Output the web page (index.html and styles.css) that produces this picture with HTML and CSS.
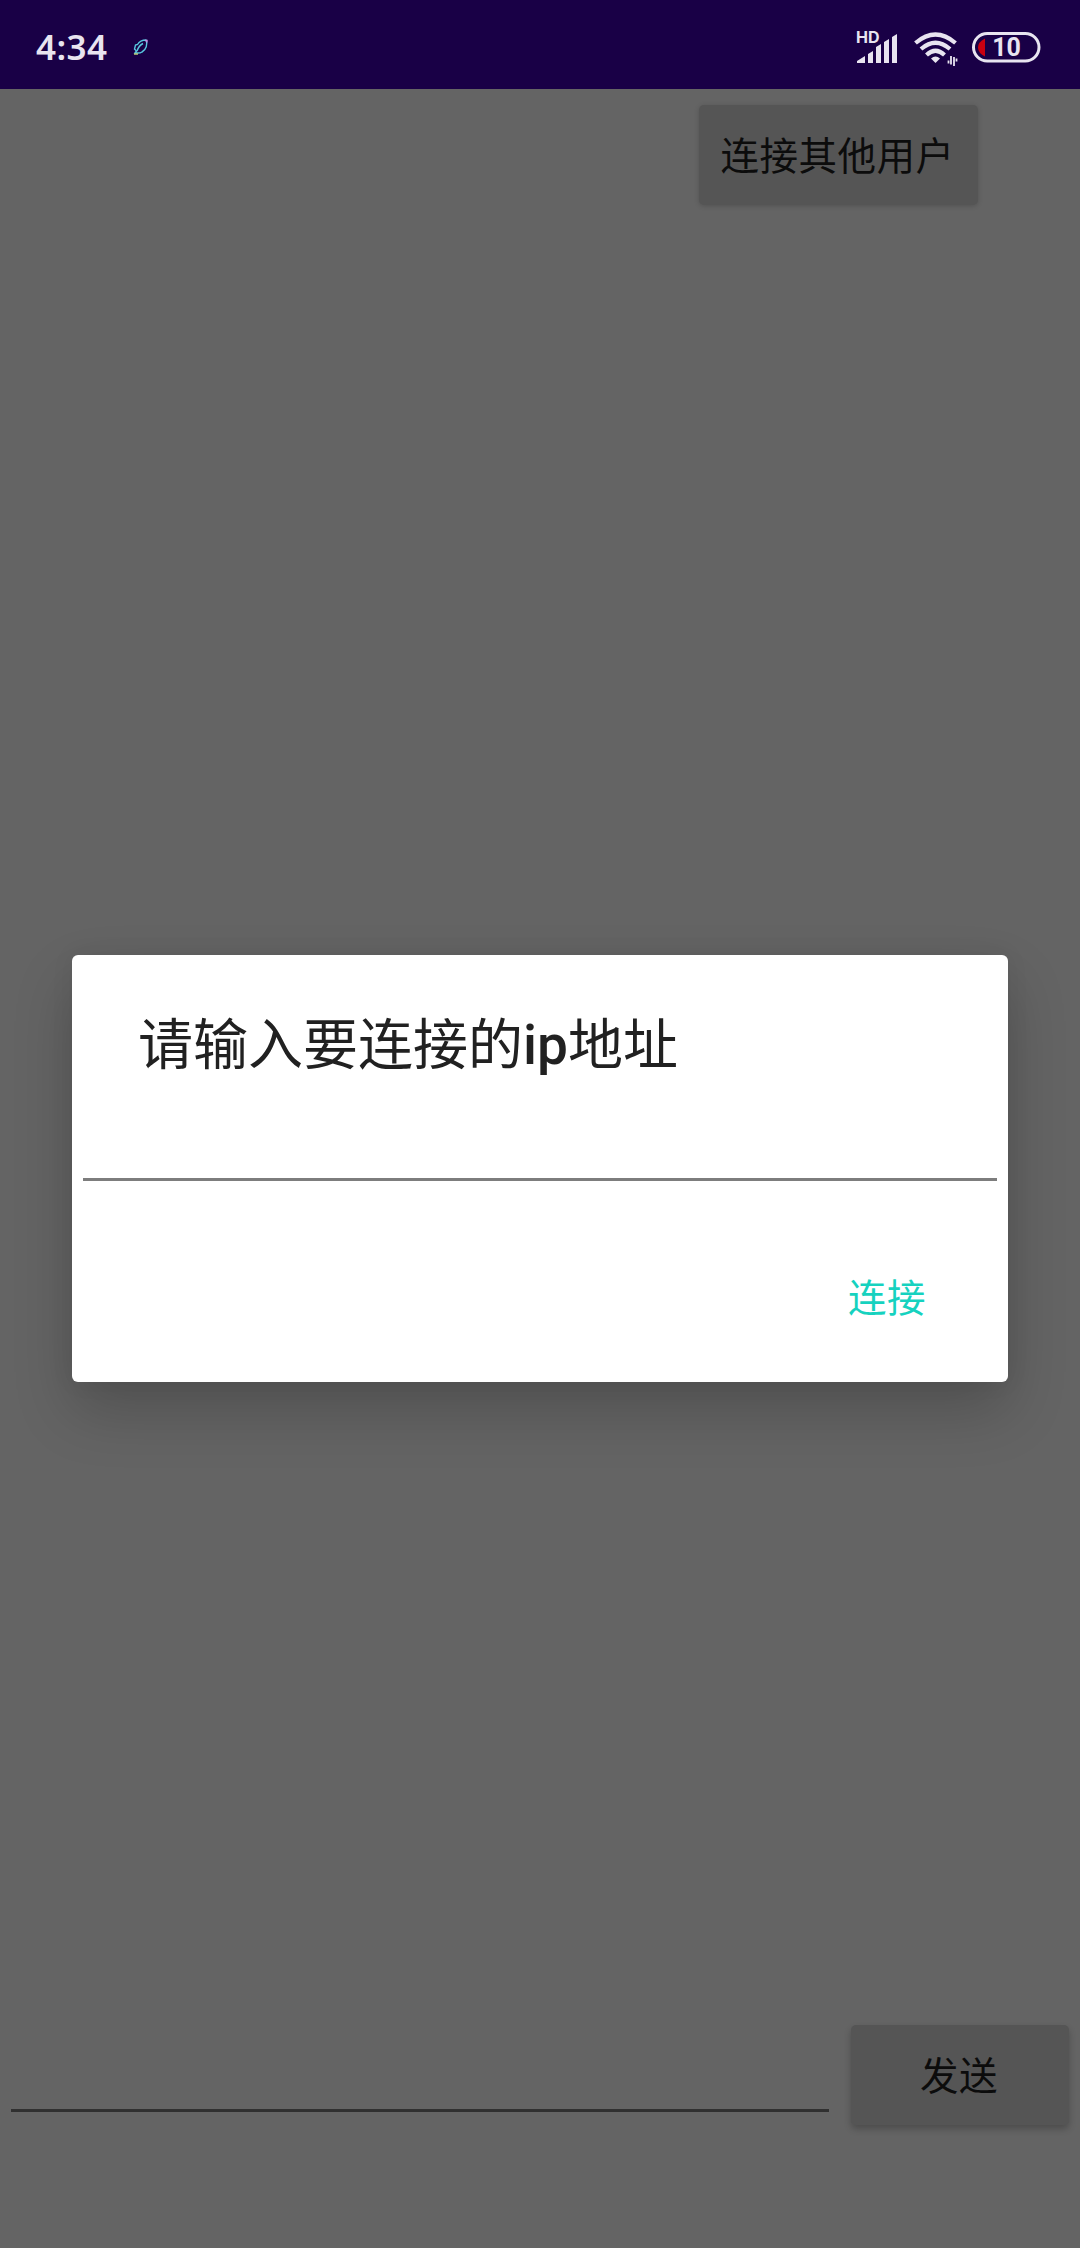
FILE: index.html
```html
<!DOCTYPE html>
<html lang="zh-CN">
<head>
<meta charset="utf-8">
<title>连接</title>
<link rel="stylesheet" href="styles.css">
</head>
<body>
<div class="screen">
  <header class="status">
    <span class="clock">4:34</span>
    <svg class="feather" width="16" height="17" viewBox="0 0 16 17" fill="none" stroke="#58c8e0" stroke-width="1.4">
      <path d="M2 14L3.500 12L1.500 10L2.500 6L4.500 5.500C6 3 8 1 13 1C15 5 13 11 9 13C7 14.500 5 14 2 14Z"/>
      <path d="M4 12C5 9 7 6 10 4.500"/>
      <path d="M12 1.500h2v2" stroke="#c58be0"/>
      <path d="M1 15h4" stroke="#c9d878"/>
    </svg>
    <div class="indicators">
      <div class="signal">
        <span class="hd">HD</span>
        <svg width="42" height="32" viewBox="0 0 42 32" fill="#e8e4f0">
          <path d="M1 31V29L9 24V31ZM12 31V22L17 19V31ZM20 31V15L25 12V31ZM28 31V10L33 7V31ZM36 31V5L41 2V31Z"/>
        </svg>
      </div>
      <svg class="wifi" width="44" height="36" viewBox="0 0 44 36">
        <g fill="none" stroke="#e8e4f0" stroke-width="4.200">
          <path d="M1.500 12Q21.500 -5 41.500 12"/>
          <path d="M7 18Q21.500 5.500 36 18"/>
          <path d="M12.500 24Q21.500 15.500 30.500 24"/>
        </g>
        <path fill="#e8e4f0" d="M17 27.500Q21.500 23.500 26 27.500L21.500 32Z"/>
        <path d="M37 25V33.500M34.500 29.500V32.500M40 26V35M42.500 27.500V30.500" fill="none" stroke="#e8e4f0" stroke-width="1.800"/>
      </svg>
      <div class="battery">
        <svg width="69" height="31" viewBox="0 0 69 31">
          <rect x="1.500" y="1.500" width="65.500" height="27.500" rx="13.750" fill="none" stroke="#e8e4f0" stroke-width="3"/>
          <path d="M13 6.500V24.500Q6 21 6 15.500T13 6.500Z" fill="#c90010"/>
        </svg>
        <span class="level">10</span>
      </div>
    </div>
  </header>
  <main class="chat">
    <button class="btn btn-peer">连接其他用户</button>
    <div class="composer">
      <div class="field"></div>
      <button class="btn btn-send">发送</button>
    </div>
  </main>
  <section class="dialog" role="dialog">
    <h1 class="dialog-title">请输入要连接的<span class="latin">ip</span>地址</h1>
    <div class="dialog-field"></div>
    <button class="dialog-action">连接</button>
  </section>
</div>
</body>
</html>
```
FILE: styles.css
```css
* { box-sizing: border-box; }
body { margin: 0; }
button { border: 0; padding: 0; background: none; }

.screen {
  position: relative;
  display: flex;
  flex-direction: column;
  width: 1080px;
  height: 2248px;
  overflow: hidden;
  background: #646464;
  font-family: Roboto, "Noto Sans CJK SC", sans-serif;
}

.status {
  display: flex;
  align-items: center;
  height: 89px;
  padding: 6px 39px 0 36px;
  background: #190046;
  color: #e8e4f0;
}
.clock {
  width: 97px;
  font: 600 35px/40px "Noto Sans", sans-serif;
  letter-spacing: 0.4px;
  margin-top: -2px;
}
.feather { margin-top: -1px; }
.indicators {
  display: flex;
  align-items: center;
  margin-left: auto;
}
.signal { position: relative; height: 32px; }
.hd {
  position: absolute;
  left: 0;
  top: -3px;
  font: 700 16px/16px Inter, sans-serif;
}
.wifi { margin: 2px 0 0 16px; }
.battery {
  position: relative;
  height: 31px;
  margin-left: 14px;
}
.level {
  position: absolute;
  inset: 0;
  font: 700 25px/31px Roboto, sans-serif;
  text-align: center;
}

.chat {
  display: flex;
  flex: 1;
  flex-direction: column;
  justify-content: space-between;
  align-items: flex-start;
  padding: 16px 11px 123px;
}
.btn {
  height: 100px;
  padding-bottom: 4px;
  border-radius: 5px;
  background: #555;
  box-shadow: 0 4px 7px rgba(0, 0, 0, 0.24);
  color: #0c0c0c;
  font: 400 38.5px/96px "Noto Sans CJK SC", sans-serif;
  letter-spacing: 0.5px;
}
.btn-peer {
  width: 279px;
  margin-left: 688px;
  padding-right: 2px;
  box-shadow: 0 1px 5px rgba(0, 0, 0, 0.18);
}
.composer {
  display: flex;
  justify-content: space-between;
  width: 100%;
}
.field {
  width: 818px;
  height: 87px;
  border-bottom: 3px solid #303030;
}
.btn-send { width: 218px; padding-right: 2px; }

.dialog {
  position: absolute;
  left: 72px;
  top: 955px;
  display: flex;
  flex-direction: column;
  width: 936px;
  height: 427px;
  padding: 45px 11px 0;
  border-radius: 6px;
  background: #fff;
  box-shadow: 0 28px 60px rgba(0, 0, 0, 0.2), 0 0 24px rgba(0, 0, 0, 0.06);
}
.dialog-title {
  height: 80px;
  margin: 0 0 0 55px;
  color: #212121;
  font: 400 55px/80px "Noto Sans CJK SC", sans-serif;
}
.latin {
  font-family: Roboto, sans-serif;
  font-weight: 500;
  line-height: 1;
}
.dialog-field {
  height: 101px;
  border-bottom: 3px solid #7d7d7d;
}
.dialog-action {
  align-self: flex-end;
  margin: 68px 71px 0 0;
  color: #16d2bf;
  font: 400 38.5px/100px Roboto, "Noto Sans CJK SC", sans-serif;
  letter-spacing: 0.5px;
}
```
